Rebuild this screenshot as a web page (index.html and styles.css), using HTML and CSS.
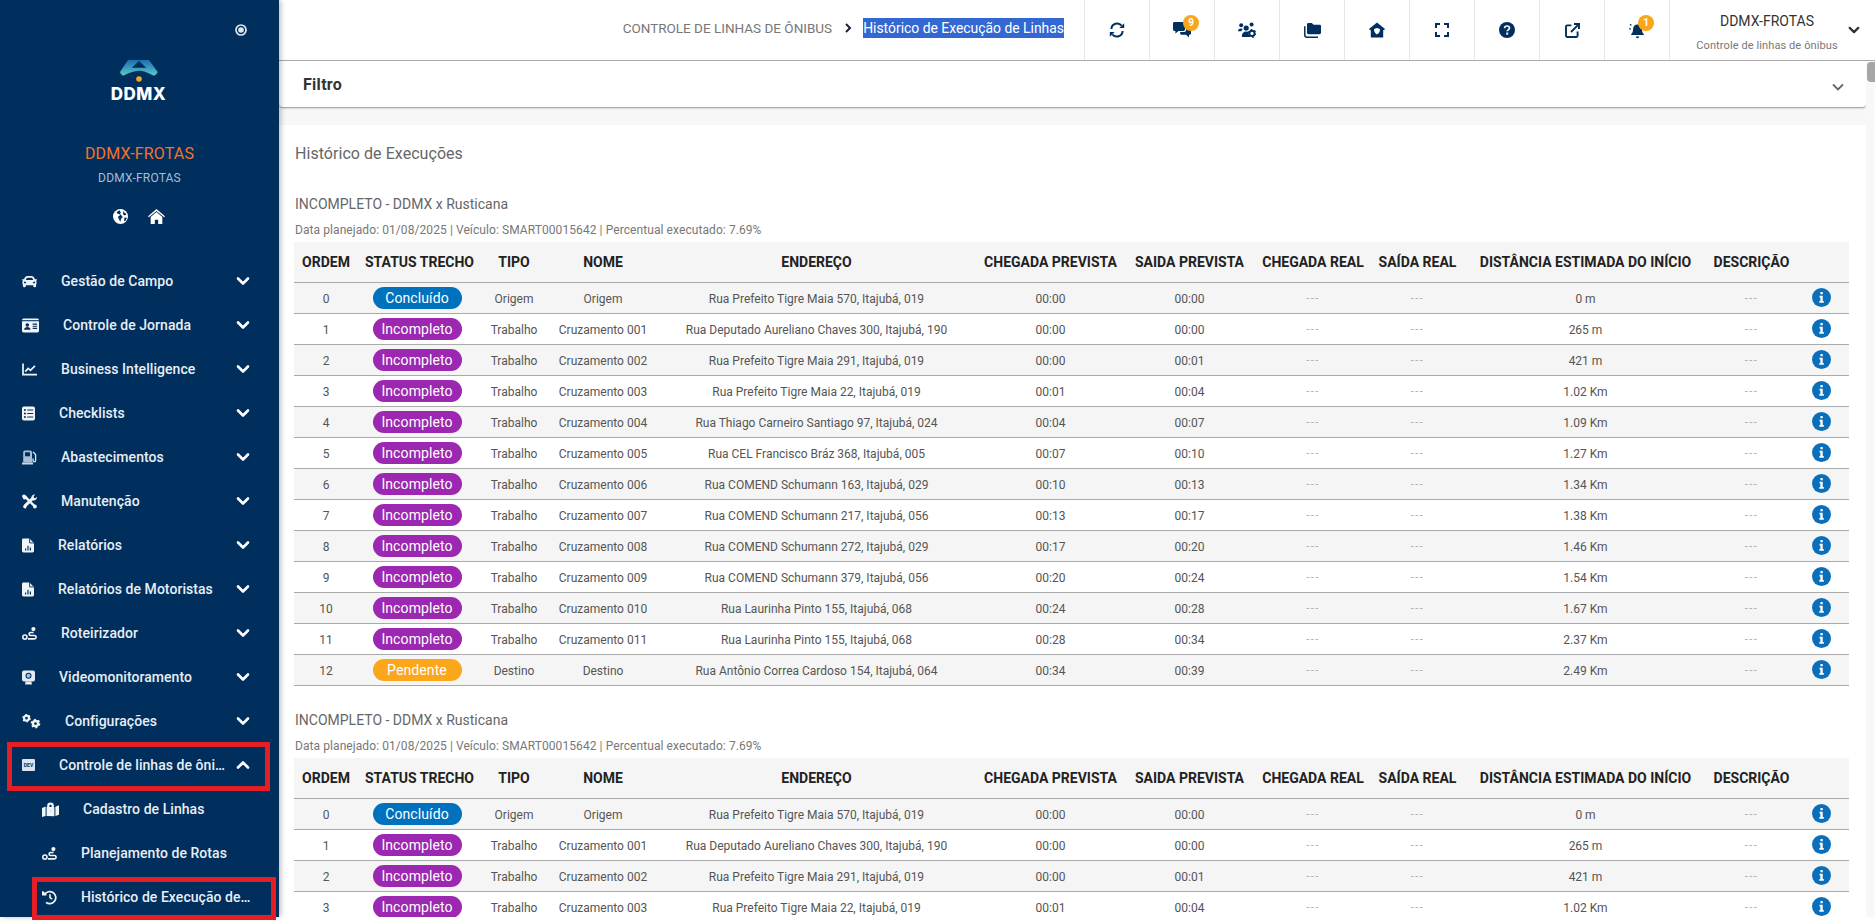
FILE: index.html
```html
<!DOCTYPE html>
<html lang="pt-BR">
<head>
<meta charset="utf-8">
<title>Histórico de Execução de Linhas</title>
<link rel="stylesheet" href="styles.css">
</head>
<body>
<svg class="defs" aria-hidden="true">
  <defs>
    <linearGradient id="logo-grad" x1="0" y1="0" x2="0" y2="1"><stop offset="0" stop-color="#1b6fae"/><stop offset=".55" stop-color="#3f9fc0"/><stop offset="1" stop-color="#5cc9c9"/></linearGradient>
    <symbol id="i-down" viewBox="0 0 14 14"><path d="M2 4.5l5 5 5-5" fill="none" stroke="currentColor" stroke-width="2.6" stroke-linecap="round" stroke-linejoin="round"/></symbol>
    <symbol id="i-up" viewBox="0 0 14 14"><path d="M2 9.5l5-5 5 5" fill="none" stroke="currentColor" stroke-width="2.6" stroke-linecap="round" stroke-linejoin="round"/></symbol>
    <symbol id="i-info" viewBox="0 0 20 20"><circle cx="10" cy="10" r="10" fill="#0a6fba"/><path d="M8.9 4.2h2.4v2.4H8.9zM7.9 8.2h3.4v5.6h1.1v1.8H7.7v-1.8h1.1v-3.8h-.9z" fill="#fff"/></symbol>
    <symbol id="i-car" viewBox="0 0 512 512"><path fill="currentColor" d="M499.99 176h-59.87l-16.64-41.6C406.38 91.63 365.57 64 319.5 64h-127c-46.06 0-86.88 27.63-103.99 70.4L71.87 176H12.01C4.2 176-1.53 183.34.37 190.91l6 24C7.7 220.25 12.5 224 18.01 224h20.07C24.65 235.73 16 252.78 16 272v48c0 16.12 6.16 30.67 16 41.93V416c0 17.67 14.33 32 32 32h32c17.67 0 32-14.33 32-32v-32h256v32c0 17.67 14.33 32 32 32h32c17.67 0 32-14.33 32-32v-54.07c9.84-11.25 16-25.8 16-41.93v-48c0-19.22-8.65-36.27-22.07-48H494c5.51 0 10.31-3.75 11.64-9.09l6-24c1.89-7.57-3.84-14.91-11.65-14.91zm-352.06-17.83c7.29-18.22 24.94-30.17 44.57-30.17h127c19.63 0 37.28 11.95 44.57 30.17L384 208H128l19.93-49.83zM96 319.8c-19.2 0-32-12.76-32-31.9S76.8 256 96 256s48 28.71 48 47.85-28.8 15.95-48 15.95zm320 0c-19.2 0-48 3.19-48-15.95S396.8 256 416 256s32 12.76 32 31.9-12.8 31.9-32 31.9z"/></symbol>
    <symbol id="i-id" viewBox="0 0 16 13"><rect width="16" height="13" rx="1.5" fill="currentColor"/><rect x="0" y="1.5" width="16" height="1" fill="#002f5e"/><circle cx="5" cy="6" r="1.7" fill="#002f5e"/><path d="M2 10.6c0-1.8 1.3-2.6 3-2.6s3 .8 3 2.6z" fill="#002f5e"/><path d="M10 5.2h4.2M10 7.2h4.2M10 9.2h4.2" stroke="#002f5e" stroke-width="1"/></symbol>
    <symbol id="i-chart" viewBox="0 0 15 13"><path d="M1 .5V11.7H15" fill="none" stroke="currentColor" stroke-width="1.7"/><path d="M3.2 8.6l3-3.2 2.2 2 4.6-4.6" fill="none" stroke="currentColor" stroke-width="1.7"/></symbol>
    <symbol id="i-list" viewBox="0 0 13 14"><rect width="13" height="14" rx="2" fill="currentColor"/><path d="M5.2 3.5h6M5.2 7h6M5.2 10.5h6" stroke="#002f5e" stroke-width="1.1"/><circle cx="2.9" cy="3.5" r="1" fill="#002f5e"/><circle cx="2.9" cy="7" r="1" fill="#002f5e"/><circle cx="2.9" cy="10.5" r="1" fill="#002f5e"/></symbol>
    <symbol id="i-gas" viewBox="0 0 15 14"><path d="M1.2 1.8A1.8 1.8 0 013 0h5.2A1.8 1.8 0 0110 1.8V12H1.2z" fill="#a9bed3"/><rect x="3" y="1.8" width="5" height="4" fill="#002f5e"/><rect y="12" width="11" height="2" fill="#c9d6e3"/><path d="M11 1.5l2.6 2.6v6a1.3 1.3 0 01-2.6 0V8" fill="none" stroke="#dfe7ef" stroke-width="1.3"/></symbol>
    <symbol id="i-tools" viewBox="0 0 15 14"><path d="M2.4 1.4l10.6 10.8" stroke="currentColor" stroke-width="2.4" fill="none"/><path d="M11.6 3.2L2.4 11.8" stroke="currentColor" stroke-width="3" fill="none"/><path d="M.4.4l2-.4 2.4 2.2-.2 1.6-1.4 1.2-1.6-.2L.2 2.4zM9.4 3.4a3.2 3.2 0 013.8-3.4l-1.6 1.9.4 1.5 1.5.4L15 2.2a3.2 3.2 0 01-4 3.6zM.8 11.8l3-1 1 1-1 2.2-1.8-.2z" fill="currentColor"/><circle cx="12.9" cy="12" r="1.9" fill="currentColor"/></symbol>
    <symbol id="i-file" viewBox="0 0 12 14"><path d="M1.4 0H7.4L12 4.6V12.6A1.4 1.4 0 0110.6 14H1.4A1.4 1.4 0 010 12.6V1.4A1.4 1.4 0 011.4 0z" fill="currentColor"/><path d="M7.6 0V4.4H12" fill="none" stroke="#002f5e" stroke-width=".9"/><path d="M3.6 12V10M6 12V7.2M8.4 12V9" stroke="#002f5e" stroke-width="1.2"/></symbol>
    <symbol id="i-route" viewBox="0 0 15 14"><circle cx="2.9" cy="10.6" r="2.1" fill="none" stroke="currentColor" stroke-width="1.6"/><circle cx="11.4" cy="2.6" r="2.1" fill="currentColor"/><path d="M6 12.4h6.4a1.7 1.7 0 000-3.4H8.6a1.5 1.5 0 010-3h3" fill="none" stroke="currentColor" stroke-width="1.6"/></symbol>
    <symbol id="i-video" viewBox="0 0 13 14"><rect width="13" height="11" rx="2" fill="#e4ebf2"/><circle cx="6.5" cy="5.2" r="3" fill="#002f5e"/><circle cx="6.5" cy="5.2" r="2" fill="#a9bed3"/><path d="M3.6 11h5.8l.6 3H3z" fill="#e4ebf2"/></symbol>
    <symbol id="i-cogs" viewBox="0 0 19 15"><circle cx="4.5" cy="4.2" r="2.5" fill="none" stroke="currentColor" stroke-width="2.2"/><circle cx="4.5" cy="4.2" r="3.6" fill="none" stroke="currentColor" stroke-width="1.4" stroke-dasharray="1.7 2.1"/><circle cx="13.5" cy="9.6" r="2.6" fill="none" stroke="currentColor" stroke-width="2.4"/><circle cx="13.5" cy="9.6" r="4" fill="none" stroke="currentColor" stroke-width="1.6" stroke-dasharray="1.9 2.3"/></symbol>
    <symbol id="i-map" viewBox="0 0 17 14"><path d="M0 5.5l3.6-1.4v9.4L0 14.4zM4.6 4.4L6 4.6 8.5 9l2.4-4.2 1.5-.4v9.4l-7.8-.2zM13.4 4.2L17 2.8v9.4l-3.6 1.4z" fill="currentColor"/><path d="M8.5 0A3.4 3.4 0 005.1 3.4C5.1 5.5 8.5 8.6 8.5 8.6s3.4-3.1 3.4-5.2A3.4 3.4 0 008.5 0z" fill="currentColor"/><circle cx="8.5" cy="3.4" r="1.2" fill="#002f5e"/></symbol>
    <symbol id="i-history" viewBox="0 0 15 14"><path d="M2.5 4.2A6 6 0 114 11.8" fill="none" stroke="currentColor" stroke-width="1.7"/><path d="M0 .8h1.4l2.8 3 .4 1.2H0z" fill="currentColor"/><path d="M8 3.8V7.2l2.2 1.5" fill="none" stroke="currentColor" stroke-width="1.6"/></symbol>
    <symbol id="i-sync" viewBox="0 0 16 16"><path d="M2.4 7A5.7 5.7 0 0112.6 3.7" fill="none" stroke="currentColor" stroke-width="2"/><path d="M10.4 6H15.2V1.2z" fill="currentColor"/><path d="M13.6 9A5.7 5.7 0 013.4 12.3" fill="none" stroke="currentColor" stroke-width="2"/><path d="M5.6 10H.8v4.8z" fill="currentColor"/></symbol>
    <symbol id="i-comments" viewBox="0 0 18 16"><path d="M1.4 0h9.2A1.4 1.4 0 0112 1.4v6.2A1.4 1.4 0 0110.6 9H5.5L2.4 11.4V9h-1A1.4 1.4 0 010 7.6V1.4A1.4 1.4 0 011.4 0z" fill="currentColor"/><path d="M13 4.6h3.6A1.4 1.4 0 0118 6v5.4a1.4 1.4 0 01-1.4 1.4h-.6V15.4L13 12.8H8.6a1.4 1.4 0 01-1.4-1.4V10h4a1.8 1.8 0 001.8-1.8z" fill="currentColor"/></symbol>
    <symbol id="i-users" viewBox="0 0 18 16"><circle cx="3.2" cy="3.2" r="2" fill="currentColor"/><circle cx="13.6" cy="2.4" r="2" fill="currentColor"/><circle cx="8.2" cy="6" r="2.6" fill="currentColor"/><path d="M0 9.2C0 7.4 1.2 6.4 2.8 6.4c.9 0 1.4.3 1.9.8C4 8 3.6 8.6 3.4 9.2zM3.8 15c0-3.4 1.6-5.4 4.4-5.4 1 0 1.9.2 2.6.7-.3 1.4 0 3.4 1 4.7z" fill="currentColor"/><circle cx="14" cy="11.4" r="2.6" fill="none" stroke="currentColor" stroke-width="1.9"/><circle cx="14" cy="11.4" r="3.9" fill="none" stroke="currentColor" stroke-width="1.2" stroke-dasharray="1.7 2.4"/></symbol>
    <symbol id="i-folder" viewBox="0 0 17 15"><path d="M3 1.4A1.4 1.4 0 014.4 0h3.4l1.8 1.8h5.8A1.4 1.4 0 0117 3.2v6.6a1.4 1.4 0 01-1.4 1.4H4.4A1.4 1.4 0 013 9.8z" fill="currentColor"/><path d="M.8 3.2V12a2.2 2.2 0 002.2 2.2h11" fill="none" stroke="currentColor" stroke-width="1.5"/></symbol>
    <symbol id="i-shieldhome" viewBox="0 0 16 15"><path d="M8 0L16 6.6l-1 1.2-.8-.6V15H1.8V7.2L1 7.8 0 6.6z" fill="currentColor"/><path d="M8 5.4l3 1.1c0 2.8-1.2 4.6-3 5.4-1.8-.8-3-2.6-3-5.4z" fill="#fff"/></symbol>
    <symbol id="i-expand" viewBox="0 0 14 14"><path d="M1 5V1H5M9 1H13V5M13 9V13H9M5 13H1V9" fill="none" stroke="currentColor" stroke-width="2"/></symbol>
    <symbol id="i-help" viewBox="0 0 16 16"><circle cx="8" cy="8" r="8" fill="currentColor"/><path d="M5.6 6.2C5.6 4.8 6.6 4 8 4c1.4 0 2.5.8 2.5 2.1 0 1.8-2.3 1.8-2.3 3.2" fill="none" stroke="#fff" stroke-width="1.7"/><rect x="7.2" y="10.6" width="2" height="2" fill="#fff"/></symbol>
    <symbol id="i-external" viewBox="0 0 15 15"><path d="M6.4 2.4H2.2A1.2 1.2 0 001 3.6v9.2A1.2 1.2 0 002.2 14h9.2a1.2 1.2 0 001.2-1.2V8.6" fill="none" stroke="currentColor" stroke-width="1.9"/><path d="M6 9l7.4-7.4M9 1h5v5" fill="none" stroke="currentColor" stroke-width="1.9"/></symbol>
    <symbol id="i-bell" viewBox="0 0 17 17"><path d="M8.5 2.4c2.7 0 4.4 2 4.4 4.8 0 2.4.8 3.7 1.9 4.8v1H2.2v-1c1.1-1.1 1.9-2.4 1.9-4.8 0-2.8 1.7-4.8 4.4-4.8z" fill="currentColor"/><path d="M6.8 14.6h3.4a1.7 1.7 0 01-3.4 0z" fill="currentColor"/><path d="M.2 6.8h1.8M1 2.2l1.5 1.2" stroke="currentColor" stroke-width="1.2"/></symbol>
    <symbol id="i-home" viewBox="0 0 18 16"><path d="M9 0L18 7.6l-.9 1.1L9 2 .9 8.7 0 7.6z" fill="currentColor"/><path d="M2.8 8.4L9 3.2l6.2 5.2V16h-4.4v-4.6H7.2V16H2.8z" fill="currentColor"/></symbol>
    <symbol id="i-globe" viewBox="0 0 16 16"><circle cx="8" cy="8" r="8" fill="#fff"/><path d="M7 1.4L4 3.2l.8 1.8 2 .2.6 1.6-2.2 1.4 1.2 3 1.4 2.4 1-3.4 1.6-1.8-2-2.2-1-1 1-1.4zM11 1.8l1 2 2.4 1.6-1.6 1.4-2-1zM12.2 9l2.6.2-1.4 3.2-1.6.6z" fill="#002f5e"/></symbol>
    <symbol id="i-radio" viewBox="0 0 12 12"><circle cx="6" cy="6" r="5" fill="none" stroke="#dfe7ef" stroke-width="1.7"/><circle cx="6" cy="6" r="2.8" fill="#dfe7ef"/></symbol>
  </defs>
</svg>

<div class="app">
  <aside class="sidebar">
    <div class="brand">
      <svg class="radio"><use href="#i-radio"/></svg>
      <svg class="logo-mark" viewBox="0 0 40 24"><path d="M1 13L9 1H30L38.7 13Q38 16 35 16.7C29 14 25 11.7 20 11.7 15 11.7 10 14 4 16.7Q1.500 16 1 13z" fill="url(#logo-grad)"/><path d="M20 2L27.3 8.700H12.700z" fill="#002f5e"/><circle cx="20" cy="20" r="2.800" fill="#f6a623"/></svg>
      <div class="logo-text">DDMX</div>
      <div class="brand-name">DDMX-FROTAS</div>
      <div class="brand-sub">DDMX-FROTAS</div>
      <div class="brand-icons">
        <svg class="b-globe"><use href="#i-globe"/></svg>
        <svg class="b-home"><use href="#i-home"/></svg>
      </div>
    </div>
    <nav class="nav">
      <a class="item"><svg class="ic w15"><use href="#i-car"/></svg><span class="label">Gestão de Campo</span><svg class="chev"><use href="#i-down"/></svg></a>
      <a class="item"><svg class="ic w17"><use href="#i-id"/></svg><span class="label">Controle de Jornada</span><svg class="chev"><use href="#i-down"/></svg></a>
      <a class="item"><svg class="ic w15"><use href="#i-chart"/></svg><span class="label">Business Intelligence</span><svg class="chev"><use href="#i-down"/></svg></a>
      <a class="item"><svg class="ic w13"><use href="#i-list"/></svg><span class="label">Checklists</span><svg class="chev"><use href="#i-down"/></svg></a>
      <a class="item"><svg class="ic w15"><use href="#i-gas"/></svg><span class="label">Abastecimentos</span><svg class="chev"><use href="#i-down"/></svg></a>
      <a class="item"><svg class="ic w15"><use href="#i-tools"/></svg><span class="label">Manutenção</span><svg class="chev"><use href="#i-down"/></svg></a>
      <a class="item"><svg class="ic w12"><use href="#i-file"/></svg><span class="label">Relatórios</span><svg class="chev"><use href="#i-down"/></svg></a>
      <a class="item"><svg class="ic w12"><use href="#i-file"/></svg><span class="label">Relatórios de Motoristas</span><svg class="chev"><use href="#i-down"/></svg></a>
      <a class="item"><svg class="ic w15"><use href="#i-route"/></svg><span class="label">Roteirizador</span><svg class="chev"><use href="#i-down"/></svg></a>
      <a class="item"><svg class="ic w13"><use href="#i-video"/></svg><span class="label">Videomonitoramento</span><svg class="chev"><use href="#i-down"/></svg></a>
      <a class="item"><svg class="ic w19"><use href="#i-cogs"/></svg><span class="label">Configurações</span><svg class="chev"><use href="#i-down"/></svg></a>
      <a class="item marked"><span class="ic w13 dev">DEV</span><span class="label">Controle de linhas de ônibus</span><svg class="chev"><use href="#i-up"/></svg></a>
      <a class="item sub"><svg class="ic w17"><use href="#i-map"/></svg><span class="label">Cadastro de Linhas</span></a>
      <a class="item sub"><svg class="ic w15"><use href="#i-route"/></svg><span class="label">Planejamento de Rotas</span></a>
      <a class="item sub marked2"><svg class="ic w15"><use href="#i-history"/></svg><span class="label">Histórico de Execução de Linhas</span></a>
    </nav>
  </aside>

  <main class="main">
    <header class="topbar">
      <div class="crumbs">
        <span class="crumb">CONTROLE DE LINHAS DE ÔNIBUS</span>
        <svg class="crumb-sep" viewBox="0 0 8 10"><path d="M2 1l4 4-4 4" fill="none" stroke="#16243a" stroke-width="2"/></svg>
        <span class="crumb-current">Histórico de Execução de Linhas</span>
      </div>
      <div class="tool"><svg class="ti s16"><use href="#i-sync"/></svg></div>
      <div class="tool"><svg class="ti s18"><use href="#i-comments"/></svg><span class="badge">9</span></div>
      <div class="tool"><svg class="ti s18"><use href="#i-users"/></svg></div>
      <div class="tool"><svg class="ti s17"><use href="#i-folder"/></svg></div>
      <div class="tool"><svg class="ti s16"><use href="#i-shieldhome"/></svg></div>
      <div class="tool"><svg class="ti s14"><use href="#i-expand"/></svg></div>
      <div class="tool"><svg class="ti s16"><use href="#i-help"/></svg></div>
      <div class="tool"><svg class="ti s15"><use href="#i-external"/></svg></div>
      <div class="tool"><svg class="ti s17"><use href="#i-bell"/></svg><span class="badge">1</span></div>
      <div class="user">
        <div class="user-text">
          <div class="user-name">DDMX-FROTAS</div>
          <div class="user-sub">Controle de linhas de ônibus</div>
        </div>
        <svg class="user-chev"><use href="#i-down"/></svg>
      </div>
    </header>

    <div class="body">
      <div class="content">
        <section class="filter">
          <span class="filter-title">Filtro</span>
          <svg class="filter-chev" viewBox="0 0 14 14"><path d="M2 4.5l5 5 5-5" fill="none" stroke="#666" stroke-width="1.8"/></svg>
        </section>
        <section class="panel">
          <h2 class="panel-title">Histórico de Execuções</h2>

          <h3 class="run-title">INCOMPLETO - DDMX x Rusticana</h3>
          <p class="run-meta">Data planejado: 01/08/2025 | Veículo: SMART00015642 | Percentual executado: 7.69%</p>
          <table class="grid">
            <thead><tr><th>ORDEM</th><th>STATUS TRECHO</th><th>TIPO</th><th>NOME</th><th>ENDEREÇO</th><th>CHEGADA PREVISTA</th><th>SAIDA PREVISTA</th><th>CHEGADA REAL</th><th>SAÍDA REAL</th><th>DISTÂNCIA ESTIMADA DO INÍCIO</th><th>DESCRIÇÃO</th><th></th></tr></thead>
            <tbody>
              <tr><td>0</td><td><span class="pill done">Concluído</span></td><td>Origem</td><td>Origem</td><td>Rua Prefeito Tigre Maia 570, Itajubá, 019</td><td>00:00</td><td>00:00</td><td class="nil">---</td><td class="nil">---</td><td>0 m</td><td class="nil">---</td><td><svg class="info"><use href="#i-info"/></svg></td></tr>
              <tr><td>1</td><td><span class="pill inc">Incompleto</span></td><td>Trabalho</td><td>Cruzamento 001</td><td>Rua Deputado Aureliano Chaves 300, Itajubá, 190</td><td>00:00</td><td>00:00</td><td class="nil">---</td><td class="nil">---</td><td>265 m</td><td class="nil">---</td><td><svg class="info"><use href="#i-info"/></svg></td></tr>
              <tr><td>2</td><td><span class="pill inc">Incompleto</span></td><td>Trabalho</td><td>Cruzamento 002</td><td>Rua Prefeito Tigre Maia 291, Itajubá, 019</td><td>00:00</td><td>00:01</td><td class="nil">---</td><td class="nil">---</td><td>421 m</td><td class="nil">---</td><td><svg class="info"><use href="#i-info"/></svg></td></tr>
              <tr><td>3</td><td><span class="pill inc">Incompleto</span></td><td>Trabalho</td><td>Cruzamento 003</td><td>Rua Prefeito Tigre Maia 22, Itajubá, 019</td><td>00:01</td><td>00:04</td><td class="nil">---</td><td class="nil">---</td><td>1.02 Km</td><td class="nil">---</td><td><svg class="info"><use href="#i-info"/></svg></td></tr>
              <tr><td>4</td><td><span class="pill inc">Incompleto</span></td><td>Trabalho</td><td>Cruzamento 004</td><td>Rua Thiago Carneiro Santiago 97, Itajubá, 024</td><td>00:04</td><td>00:07</td><td class="nil">---</td><td class="nil">---</td><td>1.09 Km</td><td class="nil">---</td><td><svg class="info"><use href="#i-info"/></svg></td></tr>
              <tr><td>5</td><td><span class="pill inc">Incompleto</span></td><td>Trabalho</td><td>Cruzamento 005</td><td>Rua CEL Francisco Bráz 368, Itajubá, 005</td><td>00:07</td><td>00:10</td><td class="nil">---</td><td class="nil">---</td><td>1.27 Km</td><td class="nil">---</td><td><svg class="info"><use href="#i-info"/></svg></td></tr>
              <tr><td>6</td><td><span class="pill inc">Incompleto</span></td><td>Trabalho</td><td>Cruzamento 006</td><td>Rua COMEND Schumann 163, Itajubá, 029</td><td>00:10</td><td>00:13</td><td class="nil">---</td><td class="nil">---</td><td>1.34 Km</td><td class="nil">---</td><td><svg class="info"><use href="#i-info"/></svg></td></tr>
              <tr><td>7</td><td><span class="pill inc">Incompleto</span></td><td>Trabalho</td><td>Cruzamento 007</td><td>Rua COMEND Schumann 217, Itajubá, 056</td><td>00:13</td><td>00:17</td><td class="nil">---</td><td class="nil">---</td><td>1.38 Km</td><td class="nil">---</td><td><svg class="info"><use href="#i-info"/></svg></td></tr>
              <tr><td>8</td><td><span class="pill inc">Incompleto</span></td><td>Trabalho</td><td>Cruzamento 008</td><td>Rua COMEND Schumann 272, Itajubá, 029</td><td>00:17</td><td>00:20</td><td class="nil">---</td><td class="nil">---</td><td>1.46 Km</td><td class="nil">---</td><td><svg class="info"><use href="#i-info"/></svg></td></tr>
              <tr><td>9</td><td><span class="pill inc">Incompleto</span></td><td>Trabalho</td><td>Cruzamento 009</td><td>Rua COMEND Schumann 379, Itajubá, 056</td><td>00:20</td><td>00:24</td><td class="nil">---</td><td class="nil">---</td><td>1.54 Km</td><td class="nil">---</td><td><svg class="info"><use href="#i-info"/></svg></td></tr>
              <tr><td>10</td><td><span class="pill inc">Incompleto</span></td><td>Trabalho</td><td>Cruzamento 010</td><td>Rua Laurinha Pinto 155, Itajubá, 068</td><td>00:24</td><td>00:28</td><td class="nil">---</td><td class="nil">---</td><td>1.67 Km</td><td class="nil">---</td><td><svg class="info"><use href="#i-info"/></svg></td></tr>
              <tr><td>11</td><td><span class="pill inc">Incompleto</span></td><td>Trabalho</td><td>Cruzamento 011</td><td>Rua Laurinha Pinto 155, Itajubá, 068</td><td>00:28</td><td>00:34</td><td class="nil">---</td><td class="nil">---</td><td>2.37 Km</td><td class="nil">---</td><td><svg class="info"><use href="#i-info"/></svg></td></tr>
              <tr><td>12</td><td><span class="pill pend">Pendente</span></td><td>Destino</td><td>Destino</td><td>Rua Antônio Correa Cardoso 154, Itajubá, 064</td><td>00:34</td><td>00:39</td><td class="nil">---</td><td class="nil">---</td><td>2.49 Km</td><td class="nil">---</td><td><svg class="info"><use href="#i-info"/></svg></td></tr>
            </tbody>
          </table>

          <h3 class="run-title next">INCOMPLETO - DDMX x Rusticana</h3>
          <p class="run-meta">Data planejado: 01/08/2025 | Veículo: SMART00015642 | Percentual executado: 7.69%</p>
          <table class="grid">
            <thead><tr><th>ORDEM</th><th>STATUS TRECHO</th><th>TIPO</th><th>NOME</th><th>ENDEREÇO</th><th>CHEGADA PREVISTA</th><th>SAIDA PREVISTA</th><th>CHEGADA REAL</th><th>SAÍDA REAL</th><th>DISTÂNCIA ESTIMADA DO INÍCIO</th><th>DESCRIÇÃO</th><th></th></tr></thead>
            <tbody>
              <tr><td>0</td><td><span class="pill done">Concluído</span></td><td>Origem</td><td>Origem</td><td>Rua Prefeito Tigre Maia 570, Itajubá, 019</td><td>00:00</td><td>00:00</td><td class="nil">---</td><td class="nil">---</td><td>0 m</td><td class="nil">---</td><td><svg class="info"><use href="#i-info"/></svg></td></tr>
              <tr><td>1</td><td><span class="pill inc">Incompleto</span></td><td>Trabalho</td><td>Cruzamento 001</td><td>Rua Deputado Aureliano Chaves 300, Itajubá, 190</td><td>00:00</td><td>00:00</td><td class="nil">---</td><td class="nil">---</td><td>265 m</td><td class="nil">---</td><td><svg class="info"><use href="#i-info"/></svg></td></tr>
              <tr><td>2</td><td><span class="pill inc">Incompleto</span></td><td>Trabalho</td><td>Cruzamento 002</td><td>Rua Prefeito Tigre Maia 291, Itajubá, 019</td><td>00:00</td><td>00:01</td><td class="nil">---</td><td class="nil">---</td><td>421 m</td><td class="nil">---</td><td><svg class="info"><use href="#i-info"/></svg></td></tr>
              <tr><td>3</td><td><span class="pill inc">Incompleto</span></td><td>Trabalho</td><td>Cruzamento 003</td><td>Rua Prefeito Tigre Maia 22, Itajubá, 019</td><td>00:01</td><td>00:04</td><td class="nil">---</td><td class="nil">---</td><td>1.02 Km</td><td class="nil">---</td><td><svg class="info"><use href="#i-info"/></svg></td></tr>
            </tbody>
          </table>
        </section>
      </div>
      <div class="scrollbar"><div class="thumb"></div></div>
    </div>
  </main>
</div>
</body>
</html>
```
FILE: styles.css
```css
*, *::before, *::after { box-sizing: border-box; }
html, body { margin: 0; padding: 0; height: 921px; overflow: hidden; background: #fff; }
body { font-family: Roboto, "Open Sans", Arial, sans-serif; color: #555; }
.defs { position: absolute; width: 0; height: 0; }

.app { display: flex; height: 917px; }

/* sidebar */
.sidebar { flex: 0 0 279px; width: 279px; background: #002f5e; color: #e8eef4; position: relative; z-index: 2; box-shadow: 2px 0 5px rgba(0,0,0,.25); }
.brand { height: 259px; display: flex; flex-direction: column; align-items: center; padding-top: 24px; }
.radio { width: 12px; height: 12px; align-self: flex-end; margin-right: 32px; }
.logo-mark { width: 40px; height: 24px; margin-top: 23px; margin-left: -1px; display: block; }
.logo-text { font-family: Inter, Arial, sans-serif; font-weight: 800; font-size: 17px; line-height: 16px; letter-spacing: .5px; color: #fff; margin-top: 3px; margin-left: -2px; }
.brand-name { color: #f2742b; font-size: 16px; line-height: 20px; margin-top: 42px; letter-spacing: .15px; }
.brand-sub { color: #a9bdd2; font-size: 12px; line-height: 16px; margin-top: 6px; letter-spacing: .2px; }
.brand-icons { display: flex; align-items: center; gap: 20px; margin-top: 23px; margin-left: -2px; }
.b-globe { width: 15px; height: 15px; }
.b-home { width: 17px; height: 15px; color: #fff; }

.nav { display: flex; flex-direction: column; }
.item { display: flex; align-items: center; height: 44px; padding: 0 29px 0 22px; font-size: 14px; font-weight: 500; letter-spacing: .05px; white-space: nowrap; color: #e8eef4; }
.item .ic { flex: none; height: 15px; margin-right: 24px; color: #f2f5f8; }
.w12 { width: 12px; }
.w13 { width: 13px; }
.w15 { width: 15px; }
.w17 { width: 17px; }
.w19 { width: 19px; }
.label { flex: 1; min-width: 0; overflow: hidden; text-overflow: ellipsis; }
.chev { flex: none; width: 14px; height: 14px; margin-left: 8px; color: #fff; }
.item.sub { padding-left: 42px; padding-right: 26px; }
.item .dev { background: #dbe4ee; color: #002f5e; font-size: 5px; line-height: 12px; height: 12px; text-align: center; font-weight: 700; letter-spacing: 0; border-radius: 1px; }
.marked, .marked2 { position: relative; }
.marked::after { content: ""; position: absolute; left: 7px; top: -1px; width: 263px; height: 49px; border: 5px solid #e31e24; }
.marked2::after { content: ""; position: absolute; left: 32px; top: 2px; width: 244px; height: 43px; border: 5px solid #e31e24; }

/* main */
.main { flex: 1; min-width: 0; display: flex; flex-direction: column; overflow: hidden; }
.topbar { flex: 0 0 61px; height: 61px; display: flex; justify-content: flex-end; background: #fff; border-bottom: 1px solid #aaa; }
.crumbs { flex: 1; display: flex; align-items: center; justify-content: flex-end; padding-right: 20px; height: 56px; font-size: 14px; }
.crumb { color: #777; font-size: 13.5px; }
.crumb-sep { width: 8px; height: 10px; margin: 0 11px 0 12px; }
.crumb-current { background: #3367d1; color: #fff; line-height: 20px; font-size: 13.9px; }
.tool { flex: 0 0 65px; border-left: 1px solid #e6e6e6; display: flex; align-items: center; justify-content: center; position: relative; color: #002f5e; }
.ti { display: block; }
.s14 { width: 14px; height: 14px; }
.s15 { width: 15px; height: 15px; }
.s16 { width: 16px; height: 16px; }
.s17 { width: 17px; height: 17px; }
.s18 { width: 18px; height: 16px; }
.badge { position: absolute; left: 33px; top: 15px; width: 16px; height: 16px; border-radius: 50%; background: #f9a61a; color: #fff; font-size: 10px; font-weight: 700; line-height: 16px; text-align: center; }
.user { flex: 0 0 206px; border-left: 1px solid #e6e6e6; display: flex; align-items: center; }
.user-text { flex: 1; text-align: center; padding-top: 5px; }
.user-name { color: #333; font-size: 14px; line-height: 18px; }
.user-sub { color: #777; font-size: 11px; line-height: 14px; margin-top: 9px; letter-spacing: .1px; }
.user-chev { flex: none; width: 12px; height: 12px; margin-left: -16px; margin-right: 15px; color: #333; }

.body { flex: 1; min-height: 0; display: flex; background: #f7f7f7; }
.content { flex: 1; min-width: 0; overflow: hidden; }
.scrollbar { flex: 0 0 9px; background: #f8f8f8; padding: 1px 0 0 1px; }
.thumb { height: 20px; width: 8px; background: #a6a6a6; border-radius: 4px 0 0 4px; }

.filter { height: 47px; background: #fff; display: flex; align-items: center; justify-content: space-between; padding: 1px 21px 0 24px; border-bottom: 1px solid #aaa; border-radius: 0 0 4px 4px; box-shadow: 0 1px 2px rgba(0,0,0,.12); }
.filter-title { color: #333; font-size: 16px; font-weight: 700; letter-spacing: .3px; }
.filter-chev { width: 14px; height: 14px; margin-top: 5px; }

.panel { background: #fff; margin-top: 17px; padding: 19px 16px 0 15px; }
.panel-title { margin: 0 0 0 1px; font-size: 16px; font-weight: 400; line-height: 20px; color: #666; letter-spacing: .05px; }
.run-title { margin: 30px 0 0 1px; font-size: 14px; font-weight: 400; line-height: 20px; color: #666; letter-spacing: 0; }
.run-title.next { margin-top: 24px; }
.run-meta { margin: 8px 0 4px 1px; font-size: 12px; line-height: 16px; color: #777; letter-spacing: .08px; }

.grid { width: 1555px; table-layout: fixed; border-collapse: separate; border-spacing: 0; }
.grid th:nth-child(1) { width: 64px; }
.grid th:nth-child(2) { width: 123px; }
.grid th:nth-child(3) { width: 66px; }
.grid th:nth-child(4) { width: 112px; }
.grid th:nth-child(5) { width: 315px; }
.grid th:nth-child(6) { width: 153px; }
.grid th:nth-child(7) { width: 125px; }
.grid th:nth-child(8) { width: 122px; }
.grid th:nth-child(9) { width: 87px; }
.grid th:nth-child(10) { width: 249px; }
.grid th:nth-child(11) { width: 83px; }
.grid th:nth-child(12) { width: 56px; }
.grid th { height: 41px; padding: 0; background: #f5f5f5; color: #222; font-size: 14px; font-weight: 700; text-align: center; white-space: nowrap; border-bottom: 1px solid #aaa; }
.grid td { height: 31px; padding: 2px 0 0; font-size: 12px; color: #555; text-align: center; white-space: nowrap; border-bottom: 1px solid #aaa; line-height: 16px; }
.grid td:nth-child(2) { padding-right: 5px; }
.grid tbody tr:nth-child(odd) td { background: #f5f5f5; }
.grid td.nil { color: #aaa; font-size: 11px; letter-spacing: 1.5px; font-variant-ligatures: none; }
.pill { display: block; width: 89px; height: 22px; margin: -2px auto 0; border-radius: 11px; color: #fff; font-size: 14px; line-height: 22px; letter-spacing: .1px; }
.done { background: #0071bc; }
.inc { background: #9c27b0; }
.pend { background: #fca61c; }
.info { display: block; width: 19px; height: 19px; margin: -4px auto 0; }
```
